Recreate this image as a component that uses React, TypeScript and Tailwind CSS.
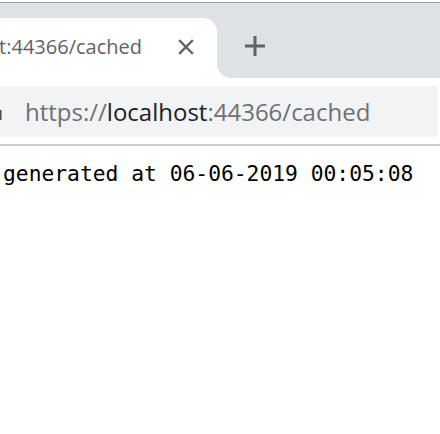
const sans = { fontFamily: '"Open Sans", "Noto Sans", sans-serif' };

export default function App() {
	return (
		<div className="flex h-[434px] w-[440px] flex-col overflow-hidden bg-white">
			{/* top window edge */}
			<div className="mt-[2px] h-px bg-[#9aa0a6]" />

			{/* tab strip */}
			<div className="flex h-[75px]">
				<div className="flex w-[217px] flex-col bg-[#dee1e6]">
					<div className="h-[15px]" />
					<div className="flex flex-1 items-center overflow-hidden rounded-tr-[14px] bg-white">
						<div className="flex w-[142px] shrink-0 justify-end overflow-hidden">
							<span
								className="-mt-[2px] whitespace-nowrap text-[20px] leading-[28px] text-[#5f6368]"
								style={sans}
							>
								localhost:44366/cached
							</span>
						</div>
						<svg viewBox="0 0 16 16" className="-mt-[2px] ml-[36px] h-[16px] w-[16px] shrink-0">
							<path d="M2 2L14 14M14 2L2 14" stroke="#5f6368" strokeWidth="2.4" strokeLinecap="square" />
						</svg>
					</div>
				</div>
				<div className="flex-1 bg-white">
					<div className="flex h-full items-start rounded-bl-[14px] bg-[#dee1e6] pl-[28px] pt-[33px]">
						<svg viewBox="0 0 20 20" className="h-[20px] w-[20px]">
							<path d="M10 0V20M0 10H20" stroke="#5f6368" strokeWidth="3" />
						</svg>
					</div>
				</div>
			</div>

			{/* toolbar */}
			<div className="flex h-[66px] items-start bg-white pt-[8px]">
				<div className="-ml-[20px] flex h-[51px] w-[458px] items-center rounded-r-[3px] bg-[#f1f3f4]">
					<svg viewBox="0 0 16 20" className="ml-[8px] h-[20px] w-[16px] shrink-0" fill="#4a4d51">
						<path d="M4 8V5.5a4 4 0 0 1 8 0V8h1.5v10h-11V8H4Zm2 0h4V5.5a2 2 0 0 0-4 0V8Z" />
					</svg>
					<span
						className="ml-[21px] whitespace-nowrap text-[24px] leading-[32px] text-[#6e7175]"
						style={sans}
					>
						https://<span className="text-[#202124]">localhost</span>:44366/cached
					</span>
				</div>
			</div>

			{/* toolbar bottom border */}
			<div className="h-[2px] bg-[#cbcdd0]" />

			{/* page content */}
			<div className="pl-[3px] pt-[14px]">
				<p
					className="whitespace-nowrap text-[21.3px] leading-[28px] text-black"
					style={{ fontFamily: '"DejaVu Sans Mono", "Liberation Mono", monospace' }}
				>
					generated at 06-06-2019 00:05:08
				</p>
			</div>
		</div>
	);
}
